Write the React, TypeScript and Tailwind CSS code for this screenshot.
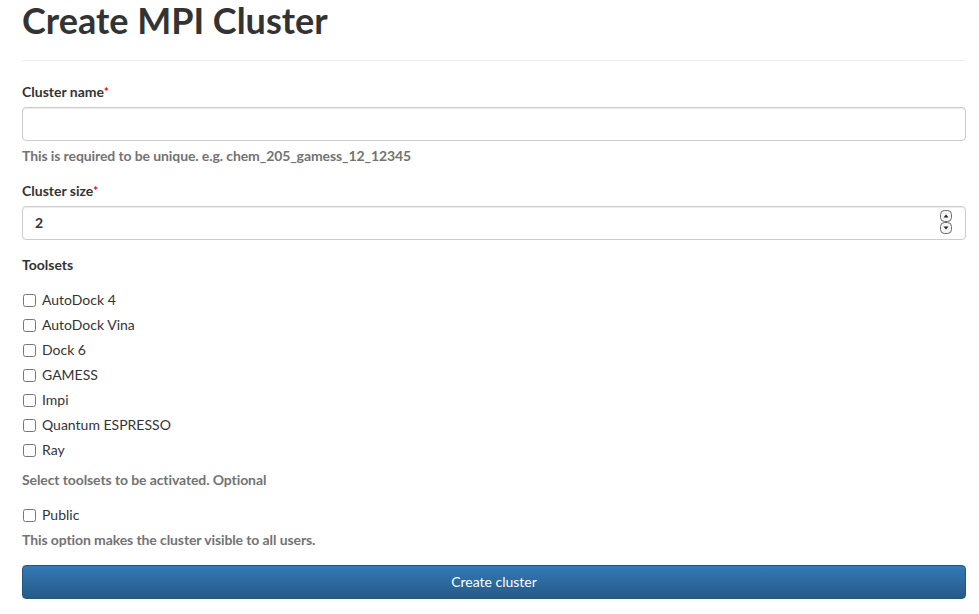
import React from 'react';

const toolsets = ['AutoDock 4', 'AutoDock Vina', 'Dock 6', 'GAMESS', 'Impi', 'Quantum ESPRESSO', 'Ray'];

const Spinner: React.FC = () => (
    <svg width="12" height="24" viewBox="0 0 12 24" className="absolute right-[14px] top-[4px]">
        <rect x="0.5" y="0.5" width="11" height="11" rx="4" fill="#f4f4f4" stroke="#6b6b6b" />
        <path d="M3.5 7.5 L6 4.5 L8.5 7.5 Z" fill="#222" />
        <rect x="0.5" y="12.5" width="11" height="11" rx="4" fill="#f4f4f4" stroke="#6b6b6b" />
        <path d="M3.5 16.5 L6 19.5 L8.5 16.5 Z" fill="#222" />
    </svg>
);

const Checkbox: React.FC<{ label: string }> = ({ label }) => (
    <label className="flex items-center h-[25px] text-[14px] text-[#333]">
        <input type="checkbox" className="w-[13px] h-[13px] ml-[1px] mr-[6px] mt-[2px]" />
        <span>{label}</span>
    </label>
);

export default function App() {
    return (
        <div className="bg-white w-[979px] h-[614px] overflow-hidden pl-[22px] pr-[13px] text-[#333]" style={{ fontFamily: 'Lato, "Open Sans", sans-serif' }}>
            <h1 className="text-[36px] font-bold leading-[1.1] pt-[1px] pb-[19px] border-b border-[#eee]">
                Create MPI Cluster
            </h1>

            <div className="pt-[21px]">
                <label className="block text-[14px] font-bold leading-[20px] mb-[5px]">
                    Cluster name<span className="text-[#e00] text-[11px] align-top">*</span>
                </label>
                <input
                    type="text"
                    className="block w-full h-[34px] rounded-[4px] border border-[#ccc] px-3 text-[14px] shadow-[inset_0_1px_1px_rgba(0,0,0,0.075)]"
                />
                <p className="text-[14px] font-bold text-[#737373] leading-[20px] mt-[5px] tracking-[-0.1px]">
                    This is required to be unique. e.g. chem_205_gamess_12_12345
                </p>
            </div>

            <div className="pt-[15px]">
                <label className="block text-[14px] font-bold leading-[20px] mb-[5px]">
                    Cluster size<span className="text-[#e00] text-[11px] align-top">*</span>
                </label>
                <div className="relative">
                    <input
                        type="text"
                        readOnly
                        value="2"
                        className="block w-full h-[34px] rounded-[4px] border border-[#ccc] px-3 text-[14px] font-bold shadow-[inset_0_1px_1px_rgba(0,0,0,0.075)]"
                    />
                    <Spinner />
                </div>
            </div>

            <div className="pt-[15px]">
                <label className="block text-[14px] font-bold leading-[20px] mb-[12px]">Toolsets</label>
                {toolsets.map((t) => (
                    <Checkbox key={t} label={t} />
                ))}
                <p className="text-[14px] font-bold text-[#737373] leading-[20px] mt-[8px] tracking-[-0.1px]">
                    Select toolsets to be activated. Optional
                </p>
            </div>

            <div className="pt-[12px]">
                <Checkbox label="Public" />
                <p className="text-[14px] font-bold text-[#737373] leading-[20px] mt-[3px] tracking-[-0.1px]">
                    This option makes the cluster visible to all users.
                </p>
            </div>

            <button className="mt-[15px] w-full h-[34px] rounded-[4px] border border-[#245580] bg-gradient-to-b from-[#337ab7] to-[#265a88] text-white text-[14px]">
                Create cluster
            </button>
        </div>
    );
}
